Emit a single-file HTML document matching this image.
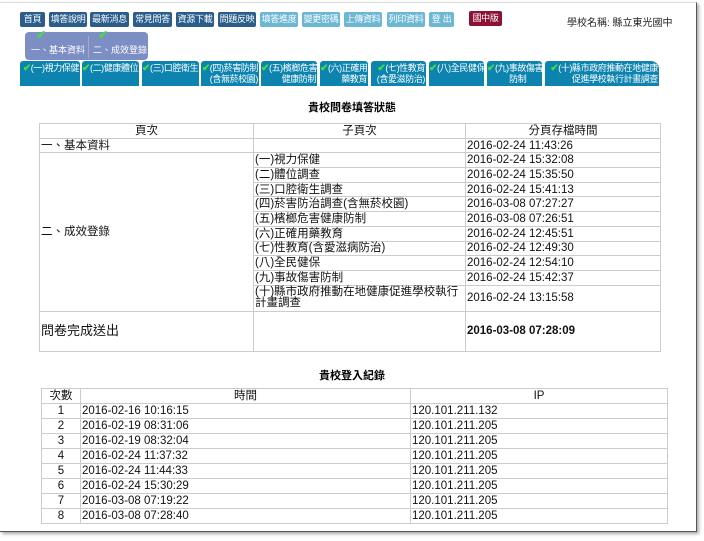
<!DOCTYPE html>
<html><head><meta charset="utf-8"><style>
body{margin:0;width:704px;height:541px;background:#fff;font-family:"Liberation Sans","Noto Sans CJK TC",sans-serif;position:relative;overflow:hidden}
.frame{position:absolute;left:0;top:2px;width:696px;height:528px;border-right:1px solid #555;border-bottom:1px solid #555;border-top:1px solid #ddd;box-shadow:2px 2px 3px #aaa}
.nav{position:absolute;top:12px;font-size:9px;color:#fff;height:15px;line-height:15px;border-radius:2px;text-align:center;white-space:nowrap;overflow:hidden;letter-spacing:-0.3px}
.d{background:#2a5d8c}.l{background:#6cb7d4}
.tab{position:absolute;background:#0d84b0;color:#fff;font-size:9px;line-height:10px;border-radius:3px 3px 0 0;top:61px;height:25px;text-align:right;padding:2px 1px 0 0;box-sizing:border-box;white-space:nowrap;overflow:hidden;letter-spacing:-0.4px}
.ck{color:#4d4;font-weight:bold;font-size:10px}
table{position:absolute;border-collapse:collapse;font-size:11.5px;color:#111}
td{border:1px solid #ccc;padding:0 1px;line-height:12px}
.t1 td{height:13.7px}
.t2 td{height:14px}
h3{position:absolute;margin:0;font-size:11px;font-weight:bold;width:704px;text-align:center}
</style></head><body>
<div class="frame"></div>
<div class="nav d" style="left:20px;width:25px">首頁</div>
<div class="nav d" style="left:49px;width:38px">填答說明</div>
<div class="nav d" style="left:90px;width:39px">最新消息</div>
<div class="nav d" style="left:133px;width:39px">常見問答</div>
<div class="nav d" style="left:176px;width:38px">資源下載</div>
<div class="nav d" style="left:218px;width:38px">問題反映</div>
<div class="nav l" style="left:260px;width:38px">填答進度</div>
<div class="nav l" style="left:302px;width:38px">變更密碼</div>
<div class="nav l" style="left:344px;width:38px">上傳資料</div>
<div class="nav l" style="left:387px;width:38px">列印資料</div>
<div class="nav l" style="left:429px;width:25px">登 出</div>
<div class="nav" style="left:469px;top:11px;width:33px;background:#8c1235">國中版</div>
<div style="position:absolute;left:567px;top:14px;font-size:10px;color:#222;white-space:nowrap">學校名稱: 縣立東光國中</div>
<div style="position:absolute;left:25px;top:32px;width:123px;height:28px;background:#7c8ec4;border-radius:4px;color:#fff;font-size:9px;white-space:nowrap">
<span style="position:absolute;left:6px;top:11px">一、基本資料</span><span style="position:absolute;left:63px;top:4px;width:1px;height:22px;background:#aab"></span><span style="position:absolute;left:68px;top:11px">二、成效登錄</span>
<span class="ck" style="position:absolute;left:11px;top:-4px;font-size:12px">✔</span><span class="ck" style="position:absolute;left:73px;top:-4px;font-size:12px">✔</span></div>
<div class="tab" style="left:20px;width:60px"><span class="ck">✔</span>(一)視力保健</div>
<div class="tab" style="left:82px;width:57px"><span class="ck">✔</span>(二)健康體位</div>
<div class="tab" style="left:142px;width:57px"><span class="ck">✔</span>(三)口腔衛生</div>
<div class="tab" style="left:201px;width:58px"><span class="ck">✔</span>(四)菸害防制<br>(含無菸校園)</div>
<div class="tab" style="left:261px;width:56px"><span class="ck">✔</span>(五)檳榔危害<br>健康防制</div>
<div class="tab" style="left:320px;width:48px"><span class="ck">✔</span>(六)正確用<br>藥教育</div>
<div class="tab" style="left:371px;width:55px"><span class="ck">✔</span>(七)性教育<br>(含愛滋防治)</div>
<div class="tab" style="left:429px;width:55px"><span class="ck">✔</span>(八)全民健保</div>
<div class="tab" style="left:487px;width:55px"><span class="ck">✔</span>(九)事故傷害<br>防制&nbsp;&nbsp;&nbsp;&nbsp;&nbsp;&nbsp;&nbsp;</div>
<div class="tab" style="left:545px;width:114px;border-radius:3px 8px 0 0"><span class="ck">✔</span>(十)縣市政府推動在地健康<br>促進學校執行計畫調查</div>
<h3 style="top:99px">貴校問卷填答狀態</h3>
<table class="t1" style="left:39px;top:123px;width:622px">
<tr><td style="width:211px;text-align:center">頁次</td><td style="width:209px;text-align:center">子頁次</td><td style="text-align:center">分頁存檔時間</td></tr>
<tr><td>一、基本資料</td><td></td><td>2016-02-24 11:43:26</td></tr>
<tr><td rowspan="10" style="vertical-align:middle">二、成效登錄</td><td>(一)視力保健</td><td>2016-02-24 15:32:08</td></tr>
<tr><td>(二)體位調查</td><td>2016-02-24 15:35:50</td></tr>
<tr><td>(三)口腔衛生調查</td><td>2016-02-24 15:41:13</td></tr>
<tr><td>(四)菸害防治調查(含無菸校園)</td><td>2016-03-08 07:27:27</td></tr>
<tr><td>(五)檳榔危害健康防制</td><td>2016-03-08 07:26:51</td></tr>
<tr><td>(六)正確用藥教育</td><td>2016-02-24 12:45:51</td></tr>
<tr><td>(七)性教育(含愛滋病防治)</td><td>2016-02-24 12:49:30</td></tr>
<tr><td>(八)全民健保</td><td>2016-02-24 12:54:10</td></tr>
<tr><td>(九)事故傷害防制</td><td>2016-02-24 15:42:37</td></tr>
<tr><td style="line-height:11px;height:25px">(十)縣市政府推動在地健康促進學校執行計畫調查</td><td>2016-02-24 13:15:58</td></tr>
<tr><td style="height:39px;font-size:13px">問卷完成送出</td><td></td><td style="font-weight:bold">2016-03-08 07:28:09</td></tr>
</table>
<h3 style="top:367px">貴校登入紀錄</h3>
<table class="t2" style="left:41px;top:388px;width:627px">
<tr><td style="width:36px;text-align:center">次數</td><td style="width:327px;text-align:center">時間</td><td style="text-align:center">IP</td></tr>
<tr><td style="text-align:center">1</td><td>2016-02-16 10:16:15</td><td>120.101.211.132</td></tr>
<tr><td style="text-align:center">2</td><td>2016-02-19 08:31:06</td><td>120.101.211.205</td></tr>
<tr><td style="text-align:center">3</td><td>2016-02-19 08:32:04</td><td>120.101.211.205</td></tr>
<tr><td style="text-align:center">4</td><td>2016-02-24 11:37:32</td><td>120.101.211.205</td></tr>
<tr><td style="text-align:center">5</td><td>2016-02-24 11:44:33</td><td>120.101.211.205</td></tr>
<tr><td style="text-align:center">6</td><td>2016-02-24 15:30:29</td><td>120.101.211.205</td></tr>
<tr><td style="text-align:center">7</td><td>2016-03-08 07:19:22</td><td>120.101.211.205</td></tr>
<tr><td style="text-align:center">8</td><td>2016-03-08 07:28:40</td><td>120.101.211.205</td></tr>
</table>
</body></html>
